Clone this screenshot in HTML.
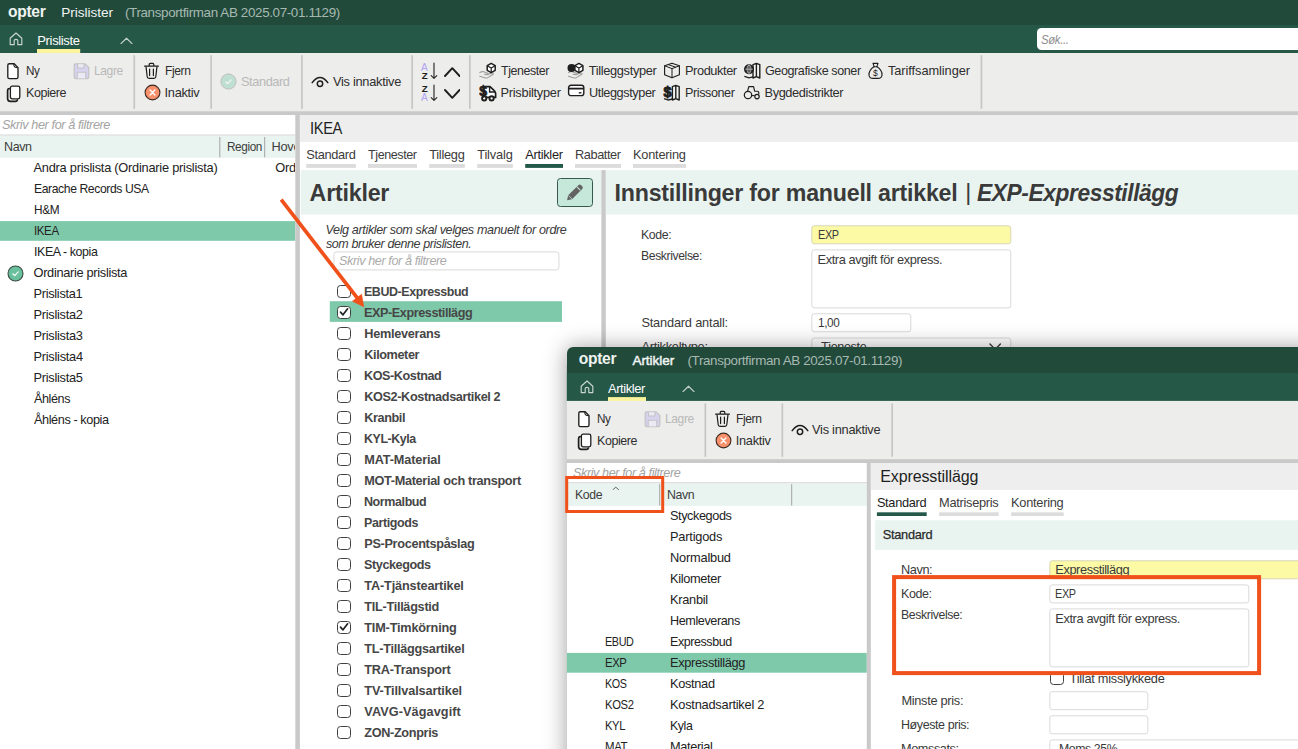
<!DOCTYPE html>
<html lang="no"><head><meta charset="utf-8"><title>Prislister</title>
<style>
html,body{margin:0;padding:0;}
body{width:1298px;height:749px;overflow:hidden;position:relative;background:#fff;
font-family:"Liberation Sans",sans-serif;font-size:12.8px;color:#2e2e2e;}
.b{position:absolute;box-sizing:border-box;}
.t{position:absolute;white-space:nowrap;}
.win{position:absolute;overflow:hidden;}
.inp{position:absolute;box-sizing:border-box;border:1px solid #d9d9d9;border-radius:3px;background:#fff;}
.cb{position:absolute;box-sizing:border-box;width:14px;height:13px;border:1.4px solid #404040;border-radius:3.5px;background:#fff;}
</style></head><body>
<div class="b" style="left:0px;top:20px;width:1298px;height:33px;background:#265848;"></div>
<div class="b" style="left:0;top:0;width:1px;height:1px;transform-origin:0 0;transform:translate(0px,0px) scale(1298,24.9);background:#214a3b;"></div>
<div class="t" style="left:8.1px;top:2.6px;line-height:18px;letter-spacing:-0.325px;font-size:15.6px;color:#eef3f0;font-weight:bold;">opter</div>
<div class="t" style="left:61.2px;top:5.1px;line-height:16px;letter-spacing:-0.038px;font-size:13.6px;color:#f1f5f3;">Prislister</div>
<div class="t" style="left:125.0px;top:5.1px;line-height:16px;letter-spacing:-0.358px;font-size:13.4px;color:#a7b9b1;">(Transportfirman AB 2025.07-01.1129)</div>
<svg class="b" style="left:8px;top:31px;" width="16" height="16" viewBox="0 0 16 16" fill="none"><path d="M2.2 7.2 L8 2 L13.8 7.2 V13.6 H9.8 V9.6 Q9.8 8.4 8 8.4 Q6.2 8.4 6.2 9.6 V13.6 H2.2 Z" stroke="#c9d6cf" stroke-width="1.15" stroke-linejoin="round"/></svg>
<div class="t" style="left:37.3px;top:32.8px;line-height:16px;letter-spacing:-0.352px;font-size:13px;color:#ffffff;">Prisliste</div>
<div class="b" style="left:0;top:0;width:1px;height:1px;transform-origin:0 0;transform:translate(37px,49px) scale(43.2,4.2);background:#fbf49c;"></div>
<svg class="b" style="left:119.5px;top:36.6px;" width="13" height="7.6" viewBox="0 0 13 7.6" fill="none"><path d="M1 6.6 L6.5 1.2 L12 6.6" stroke="#c0cec7" stroke-width="1.25" stroke-linecap="round" stroke-linejoin="round"/></svg>
<div class="b" style="left:1037px;top:27.8px;width:270px;height:22.2px;background:#fff;border-radius:4.5px;"></div>
<div class="t" style="left:1041.3px;top:31.8px;line-height:16px;letter-spacing:-0.420px;font-size:13px;color:#8f8f8f;font-style:italic;transform:scaleX(0.8793);transform-origin:0 50%;">Søk...</div>
<div class="b" style="left:0;top:0;width:1px;height:1px;transform-origin:0 0;transform:translate(0px,53px) scale(1298,58.2);background:#ededeb;"></div>
<div class="b" style="left:0;top:0;width:1px;height:1px;transform-origin:0 0;transform:translate(0px,111.2px) scale(1298,3.8);background:#c9c9c9;"></div>
<div class="b" style="left:0;top:0;width:1px;height:1px;transform-origin:0 0;transform:translate(133.4px,55.2px) scale(1.7,53.6);background:#c6c6c6;"></div>
<div class="b" style="left:0;top:0;width:1px;height:1px;transform-origin:0 0;transform:translate(210.3px,55.2px) scale(1.7,53.6);background:#c6c6c6;"></div>
<div class="b" style="left:0;top:0;width:1px;height:1px;transform-origin:0 0;transform:translate(301.1px,55.2px) scale(1.7,53.6);background:#c6c6c6;"></div>
<div class="b" style="left:0;top:0;width:1px;height:1px;transform-origin:0 0;transform:translate(411.3px,55.2px) scale(1.7,53.6);background:#c6c6c6;"></div>
<div class="b" style="left:0;top:0;width:1px;height:1px;transform-origin:0 0;transform:translate(469px,55.2px) scale(1.7,53.6);background:#c6c6c6;"></div>
<div class="b" style="left:0;top:0;width:1px;height:1px;transform-origin:0 0;transform:translate(980.6px,55.2px) scale(1.7,53.6);background:#c6c6c6;"></div>
<svg class="b" style="left:5.8px;top:62px;" width="14" height="18" viewBox="0 0 14 18" fill="none"><path d="M3.4 1.7 H8.2 L12 5.6 V15 Q12 16.6 10.4 16.6 H3.4 Q1.8 16.6 1.8 15 V3.3 Q1.8 1.7 3.4 1.7 Z" stroke="#1e1e1e" stroke-width="1.35" fill="#fff" stroke-linejoin="round"/><path d="M7.8 2 Q7.6 5.8 11.8 5.8" stroke="#1e1e1e" stroke-width="1.1"/></svg>
<div class="t" style="left:25.9px;top:62.7px;line-height:16px;letter-spacing:-0.420px;transform:scaleX(0.9132);transform-origin:0 50%;">Ny</div>
<svg class="b" style="left:72.6px;top:62.2px;" width="17" height="18" viewBox="0 0 17 18" fill="none"><path d="M2.8 1.8 H12 L15.8 5.4 V15 Q15.8 16.6 14.2 16.6 H2.8 Q1.2 16.6 1.2 15 V3.4 Q1.2 1.8 2.8 1.8 Z" stroke="#c3c3c3" stroke-width="1.2" fill="#d7d2ef"/><path d="M4.6 2.2 V6 H11 V2.2" stroke="#c3c3c3" stroke-width="1.1" fill="#ebe9f3"/><path d="M4.2 16.4 V10.2 H12.8 V16.4" stroke="#c3c3c3" stroke-width="1.1" fill="#ebe9f3"/></svg>
<div class="t" style="left:93.8px;top:62.7px;line-height:16px;letter-spacing:-0.420px;color:#b9b9b9;transform:scaleX(0.9400);transform-origin:0 50%;">Lagre</div>
<svg class="b" style="left:6px;top:84.6px;" width="15" height="18" viewBox="0 0 15 18" fill="none"><path d="M3.2 3.6 Q1.6 3.8 1.6 5.4 V13.6 Q1.6 16.4 4.4 16.4 H9.6 Q11 16.4 11.4 15" stroke="#1e1e1e" stroke-width="1.7" stroke-linecap="round"/><rect x="4.4" y="1.2" width="9.4" height="12.6" rx="1.8" stroke="#1e1e1e" stroke-width="1.3" fill="#fff"/></svg>
<div class="t" style="left:25.5px;top:84.6px;line-height:16px;letter-spacing:-0.420px;transform:scaleX(0.9735);transform-origin:0 50%;">Kopiere</div>
<svg class="b" style="left:143.2px;top:61.6px;" width="17" height="18" viewBox="0 0 17 18" fill="none"><path d="M1.6 4.2 H15.4 M6.2 4 V2.4 Q6.2 1.4 7.2 1.4 H9.8 Q10.8 1.4 10.8 2.4 V4" stroke="#1e1e1e" stroke-width="1.2" stroke-linecap="round"/><path d="M3 4.4 L4.2 14.8 Q4.4 16.4 6 16.4 H11 Q12.6 16.4 12.8 14.8 L14 4.4" stroke="#1e1e1e" stroke-width="1.2"/><path d="M6.6 7 V13.6 M10.4 7 V13.6" stroke="#1e1e1e" stroke-width="1.2" stroke-linecap="round"/></svg>
<div class="t" style="left:164.6px;top:62.7px;line-height:16px;letter-spacing:-0.420px;transform:scaleX(0.9426);transform-origin:0 50%;">Fjern</div>
<svg class="b" style="left:143.6px;top:84.3px;" width="17" height="17" viewBox="0 0 17 17" fill="none"><circle cx="8.5" cy="8.5" r="7.4" fill="#f7906b" stroke="#3a2a22" stroke-width="1.1"/><path d="M6.1 6.1 L10.9 10.9 M10.9 6.1 L6.1 10.9" stroke="#fff" stroke-width="1.4" stroke-linecap="round"/></svg>
<div class="t" style="left:164.6px;top:84.6px;line-height:16px;letter-spacing:-0.315px;">Inaktiv</div>
<svg class="b" style="left:220.4px;top:73.4px;" width="17" height="17" viewBox="0 0 17 17" fill="none"><circle cx="8.5" cy="8.5" r="7.6" fill="#bfdfd2" stroke="#bdbdbd" stroke-width="1"/><path d="M5.8 8.8 L7.7 10.6 L11.2 6.9" stroke="#f3f8f5" stroke-width="1.2" stroke-linecap="round" stroke-linejoin="round"/></svg>
<div class="t" style="left:241.3px;top:73.6px;line-height:16px;letter-spacing:-0.420px;color:#b9b9b9;transform:scaleX(0.9997);transform-origin:0 50%;">Standard</div>
<svg class="b" style="left:311px;top:75.6px;" width="18" height="12" viewBox="0 0 18 12" fill="none"><path d="M1.2 6.6 Q9 -3.6 16.8 6.6" stroke="#1e1e1e" stroke-width="1.5" stroke-linecap="round"/><circle cx="9" cy="7.8" r="2.7" stroke="#1e1e1e" stroke-width="1.5"/></svg>
<div class="t" style="left:332.9px;top:73.6px;line-height:16px;letter-spacing:-0.269px;">Vis innaktive</div>
<svg class="b" style="left:421.4px;top:62.4px;" width="18" height="18" viewBox="0 0 18 18" fill="none"><text x="0.1" y="9.4" font-family="Liberation Sans, sans-serif" font-size="10.2" font-weight="normal" fill="#b0a4f5">A</text><text x="0.7" y="16.8" font-family="Liberation Sans, sans-serif" font-size="9.7" font-weight="bold" fill="#1e1e1e">Z</text><path d="M13 1 V16.2 M10.2 13.6 L13 16.4 L15.8 13.6" stroke="#2a2a2a" stroke-width="1.15" stroke-linecap="round" stroke-linejoin="round"/></svg>
<svg class="b" style="left:421.4px;top:84.4px;" width="18" height="18" viewBox="0 0 18 18" fill="none"><text x="0.7" y="8.2" font-family="Liberation Sans, sans-serif" font-size="9.7" font-weight="bold" fill="#1e1e1e">Z</text><text x="0.1" y="17.2" font-family="Liberation Sans, sans-serif" font-size="10.2" font-weight="normal" fill="#b0a4f5">A</text><path d="M13 1 V16.2 M10.2 13.6 L13 16.4 L15.8 13.6" stroke="#2a2a2a" stroke-width="1.15" stroke-linecap="round" stroke-linejoin="round"/></svg>
<svg class="b" style="left:443.8px;top:66.5px;" width="16.6" height="10" viewBox="0 0 16.6 10" fill="none"><path d="M1 9 L8.3 1.2 L15.600000000000001 9" stroke="#1e1e1e" stroke-width="1.9" stroke-linecap="round" stroke-linejoin="round"/></svg>
<svg class="b" style="left:443.8px;top:88.6px;" width="16.6" height="10" viewBox="0 0 16.6 10" fill="none"><path d="M1 1 L8.3 8.8 L15.600000000000001 1" stroke="#1e1e1e" stroke-width="1.9" stroke-linecap="round" stroke-linejoin="round"/></svg>
<svg class="b" style="left:479.4px;top:62px;" width="18" height="18" viewBox="0 0 18 18" fill="none"><g transform="translate(0 0)"><path d="M0.8 10.6 Q2.6 9.2 4.8 9.8 L8.2 11 Q9.6 11.6 8.6 12.6 L5.6 12.4 M8.8 12.4 L13.4 11 Q14.8 11 14.2 12.2 L8.8 15.6 Q7.8 16.2 6.6 16 L0.8 14.2" stroke="#9d9d9d" stroke-width="1.1" stroke-linejoin="round" stroke-linecap="round"/></g><path d="M12.2 1.4000000000000004 L16.2 3.7 V8.3 L12.2 10.6 L8.2 8.3 V3.7 Z" stroke="#1e1e1e" stroke-width="1.5" fill="#fff" stroke-linejoin="round"/><path d="M8.2 3.7 L12.2 6 L16.2 3.7 M12.2 6 V10.6" stroke="#1e1e1e" stroke-width="1.2" stroke-linejoin="round"/></svg>
<div class="t" style="left:500.5px;top:62.7px;line-height:16px;letter-spacing:-0.420px;transform:scaleX(0.9702);transform-origin:0 50%;">Tjenester</div>
<svg class="b" style="left:479.4px;top:83.6px;" width="18" height="18" viewBox="0 0 18 18" fill="none"><path d="M5 2.6 H11 L15.2 6.6 Q16.6 7.8 16.6 9.6 V13.4 H5 Z" fill="#fff" stroke="#1e1e1e" stroke-width="1.7" stroke-linejoin="round"/><path d="M10.6 3 V8 H16" stroke="#1e1e1e" stroke-width="1.4"/><circle cx="5.2" cy="14.4" r="2.1" fill="#fff" stroke="#1e1e1e" stroke-width="1.9"/><circle cx="12.6" cy="14.4" r="2.1" fill="#fff" stroke="#1e1e1e" stroke-width="1.9"/><text x="0.2" y="12.4" font-family="Liberation Sans,sans-serif" font-size="14" font-weight="bold" fill="#1e1e1e" stroke="#1e1e1e" stroke-width="0.7">$</text></svg>
<div class="t" style="left:500.5px;top:84.6px;line-height:16px;letter-spacing:-0.255px;">Prisbiltyper</div>
<svg class="b" style="left:566.4px;top:62px;" width="19" height="18" viewBox="0 0 19 18" fill="none"><g transform="translate(1.6 0)"><path d="M0.8 10.6 Q2.6 9.2 4.8 9.8 L8.2 11 Q9.6 11.6 8.6 12.6 L5.6 12.4 M8.8 12.4 L13.4 11 Q14.8 11 14.2 12.2 L8.8 15.6 Q7.8 16.2 6.6 16 L0.8 14.2" stroke="#9d9d9d" stroke-width="1.1" stroke-linejoin="round" stroke-linecap="round"/></g><circle cx="5.6" cy="6" r="4.1" fill="#1e1e1e"/><path d="M12.9 1.4000000000000004 L16.9 3.7 V8.3 L12.9 10.6 L8.9 8.3 V3.7 Z" stroke="#1e1e1e" stroke-width="1.5" fill="#fff" stroke-linejoin="round"/><path d="M8.9 3.7 L12.9 6 L16.9 3.7 M12.9 6 V10.6" stroke="#1e1e1e" stroke-width="1.2" stroke-linejoin="round"/></svg>
<div class="t" style="left:588.7px;top:62.7px;line-height:16px;letter-spacing:-0.332px;">Tilleggstyper</div>
<svg class="b" style="left:567px;top:84.2px;" width="19" height="14" viewBox="0 0 19 14" fill="none"><rect x="1.6" y="1.2" width="15.2" height="10.4" rx="2.4" stroke="#1e1e1e" stroke-width="1.4" fill="#fff"/><path d="M1.8 4.6 H16.6" stroke="#1e1e1e" stroke-width="1.8"/><path d="M11.8 8.8 H14.4" stroke="#1e1e1e" stroke-width="1.4"/></svg>
<div class="t" style="left:588.7px;top:84.6px;line-height:16px;letter-spacing:-0.420px;transform:scaleX(0.9935);transform-origin:0 50%;">Utleggstyper</div>
<svg class="b" style="left:662.9px;top:62.2px;" width="18" height="17" viewBox="0 0 18 17" fill="none"><path d="M9 1.2 L16.4 3.8 V12.8 L9 15.8 L1.6 12.8 V3.8 Z" stroke="#1e1e1e" stroke-width="1.15" stroke-linejoin="round"/><path d="M1.6 3.8 L9 6.6 L16.4 3.8 M9 6.6 V15.8 M5.2 2.6 L12.8 5.2" stroke="#1e1e1e" stroke-width="1" stroke-linejoin="round"/></svg>
<div class="t" style="left:684.6px;top:62.7px;line-height:16px;letter-spacing:-0.420px;transform:scaleX(0.9995);transform-origin:0 50%;">Produkter</div>
<svg class="b" style="left:663px;top:84.2px;" width="18" height="18" viewBox="0 0 18 18" fill="none"><path d="M9.4 2.6 L12.8 1.4 L16.2 2.6 V16 L12.8 14.6 L9.4 16 Z M12.8 1.4 V14.6" stroke="#1e1e1e" stroke-width="1.4" fill="#f4f4f2" stroke-linejoin="round"/><path d="M1 14.6 L5.4 16 L9.4 15" stroke="#1e1e1e" stroke-width="1.3"/><text x="0.4" y="12.6" font-family="Liberation Sans, sans-serif" font-size="14.5" font-weight="bold" fill="#1e1e1e" stroke="#1e1e1e" stroke-width="0.9">$</text></svg>
<div class="t" style="left:684.6px;top:84.6px;line-height:16px;letter-spacing:-0.420px;transform:scaleX(0.9841);transform-origin:0 50%;">Prissoner</div>
<svg class="b" style="left:743px;top:62.2px;" width="18" height="18" viewBox="0 0 18 18" fill="none"><path d="M10 2.6 L13.4 1.4 L16.8 2.6 V16 L13.4 14.6 L10 16 Z M13.4 1.4 V14.6" stroke="#1e1e1e" stroke-width="1.4" fill="#f4f4f2" stroke-linejoin="round"/><path d="M1.4 14.4 L6 15.8 L10 14.8" stroke="#1e1e1e" stroke-width="1.3"/><circle cx="6" cy="7.2" r="5" fill="#1e1e1e"/><path d="M2.2 7.2 H9.8 M6 3 V11.4" stroke="#ddd" stroke-width="0.7"/><ellipse cx="6" cy="7.2" rx="2" ry="4.2" stroke="#ddd" stroke-width="0.7"/></svg>
<div class="t" style="left:764.5px;top:62.7px;line-height:16px;letter-spacing:-0.420px;transform:scaleX(0.9819);transform-origin:0 50%;">Geografiske soner</div>
<svg class="b" style="left:743.3px;top:84.6px;" width="18" height="15" viewBox="0 0 18 15" fill="none"><path d="M4.6 6.2 L5.8 1.6 H10.6 L11.6 6.2 H14.4 Q15.8 6.2 15.8 7.8 V9.2" stroke="#1e1e1e" stroke-width="1.15" stroke-linejoin="round"/><circle cx="5" cy="10" r="3.7" stroke="#1e1e1e" stroke-width="1.2"/><circle cx="14" cy="11.6" r="2.2" stroke="#1e1e1e" stroke-width="1.2"/><path d="M8.8 10.6 H11.6" stroke="#1e1e1e" stroke-width="1.1"/></svg>
<div class="t" style="left:764.5px;top:84.6px;line-height:16px;letter-spacing:-0.397px;">Bygdedistrikter</div>
<svg class="b" style="left:867px;top:61.6px;" width="17" height="18" viewBox="0 0 17 18" fill="none"><path d="M6 1.4 H11 L9.8 4.6 Q15.4 8.4 15 13.2 Q14.6 16.4 11 16.4 H6 Q2.4 16.4 2 13.2 Q1.6 8.4 7.2 4.6 Z" stroke="#1e1e1e" stroke-width="1.15" stroke-linejoin="round"/><path d="M6.6 4.8 H10.4" stroke="#1e1e1e" stroke-width="1"/><text x="6" y="14.4" font-family="Liberation Sans, sans-serif" font-size="8.5" fill="#1e1e1e">$</text></svg>
<div class="t" style="left:888.0px;top:62.7px;line-height:16px;letter-spacing:-0.071px;">Tariffsamlinger</div>
<div class="b" style="left:0;top:0;width:1px;height:1px;transform-origin:0 0;transform:translate(0px,115px) scale(295.6,19.6);background:#fff;"></div>
<div class="t" style="left:2.0px;top:116.8px;line-height:16px;letter-spacing:-0.420px;font-size:13px;color:#a3a3a3;font-style:italic;transform:scaleX(0.9768);transform-origin:0 50%;">Skriv her for å filtrere</div>
<div class="b" style="left:0;top:0;width:1px;height:1px;transform-origin:0 0;transform:translate(0px,134.5px) scale(295.3,1.3);background:#d8d8d8;"></div>
<div class="b" style="left:0;top:0;width:1px;height:1px;transform-origin:0 0;transform:translate(0px,135.6px) scale(295.3,22.2);background:#e9f4f0;"></div>
<div class="t" style="left:3.5px;top:139.2px;line-height:16px;letter-spacing:-0.420px;color:#3d3d3d;transform:scaleX(0.9785);transform-origin:0 50%;">Navn</div>
<div class="b" style="left:0;top:0;width:1px;height:1px;transform-origin:0 0;transform:translate(219.3px,137px) scale(1,20.4);background:#a4a4a4;"></div>
<div class="t" style="left:226.6px;top:139.2px;line-height:16px;letter-spacing:-0.420px;color:#3d3d3d;transform:scaleX(0.9204);transform-origin:0 50%;">Region</div>
<div class="b" style="left:0;top:0;width:1px;height:1px;transform-origin:0 0;transform:translate(264.2px,137px) scale(1,20.4);background:#a4a4a4;"></div>
<div class="b" style="left:266px;top:137px;width:29.3px;height:20px;overflow:hidden"><div class="t" style="left:5.5px;top:2.2px;line-height:16px;color:#3d3d3d;letter-spacing:-0.25px">Hoved</div></div>
<div class="t" style="left:33.5px;top:159.6px;line-height:16px;letter-spacing:-0.238px;color:#222;">Andra prislista (Ordinarie prislista)</div>
<div class="t" style="left:33.5px;top:180.6px;line-height:16px;letter-spacing:-0.420px;color:#222;transform:scaleX(0.9504);transform-origin:0 50%;">Earache Records USA</div>
<div class="t" style="left:33.5px;top:201.6px;line-height:16px;letter-spacing:-0.420px;color:#222;transform:scaleX(0.9239);transform-origin:0 50%;">H&amp;M</div>
<div class="b" style="left:0;top:0;width:1px;height:1px;transform-origin:0 0;transform:translate(0px,221.1px) scale(295.3,19.7);background:#7fc9ab;"></div>
<div class="t" style="left:33.5px;top:222.6px;line-height:16px;letter-spacing:-0.420px;color:#222;transform:scaleX(0.8993);transform-origin:0 50%;">IKEA</div>
<div class="t" style="left:33.5px;top:243.6px;line-height:16px;letter-spacing:-0.420px;color:#222;transform:scaleX(0.9707);transform-origin:0 50%;">IKEA - kopia</div>
<div class="t" style="left:33.5px;top:264.6px;line-height:16px;letter-spacing:-0.316px;color:#222;">Ordinarie prislista</div>
<div class="t" style="left:33.5px;top:285.6px;line-height:16px;letter-spacing:-0.303px;color:#222;">Prislista1</div>
<div class="t" style="left:33.5px;top:306.6px;line-height:16px;letter-spacing:-0.281px;color:#222;">Prislista2</div>
<div class="t" style="left:33.5px;top:327.6px;line-height:16px;letter-spacing:-0.281px;color:#222;">Prislista3</div>
<div class="t" style="left:33.5px;top:348.6px;line-height:16px;letter-spacing:-0.259px;color:#222;">Prislista4</div>
<div class="t" style="left:33.5px;top:369.6px;line-height:16px;letter-spacing:-0.281px;color:#222;">Prislista5</div>
<div class="t" style="left:33.5px;top:390.6px;line-height:16px;letter-spacing:-0.420px;color:#222;transform:scaleX(0.9854);transform-origin:0 50%;">Åhléns</div>
<div class="t" style="left:33.5px;top:411.6px;line-height:16px;letter-spacing:-0.420px;color:#222;transform:scaleX(0.9925);transform-origin:0 50%;">Åhléns - kopia</div>
<div class="b" style="left:266px;top:158px;width:29.3px;height:20px;overflow:hidden"><div class="t" style="left:9.3px;top:2.2px;line-height:16px;color:#222;letter-spacing:-0.25px">Ordinarie</div></div>
<svg class="b" style="left:6.5px;top:264.6px;" width="17" height="17" viewBox="0 0 17 17" fill="none"><circle cx="8.5" cy="8.5" r="7.5" fill="#68c09d" stroke="#3a4a43" stroke-width="1.1"/><path d="M5.8 8.8 L7.7 10.6 L11.2 6.9" stroke="#fff" stroke-width="1.2" stroke-linecap="round" stroke-linejoin="round"/></svg>
<div class="b" style="left:0;top:0;width:1px;height:1px;transform-origin:0 0;transform:translate(295.3px,115px) scale(4.6,640);background:#c9c9c9;"></div>
<div class="b" style="left:0;top:0;width:1px;height:1px;transform-origin:0 0;transform:translate(299.9px,115px) scale(1000,26.9);background:#eeeeee;"></div>
<div class="t" style="left:309.6px;top:119.2px;line-height:20px;letter-spacing:-0.420px;font-size:16px;color:#1f1f1f;transform:scaleX(0.9203);transform-origin:0 50%;">IKEA</div>
<div class="t" style="left:306.2px;top:147.3px;line-height:16px;letter-spacing:-0.322px;color:#3c3c3c;">Standard</div>
<div class="b" style="left:0;top:0;width:1px;height:1px;transform-origin:0 0;transform:translate(306.2px,164px) scale(49.69999999999999,3.9);background:#dcdcdc;"></div>
<div class="t" style="left:368.0px;top:147.3px;line-height:16px;letter-spacing:-0.420px;color:#3c3c3c;transform:scaleX(0.9802);transform-origin:0 50%;">Tjenester</div>
<div class="b" style="left:0;top:0;width:1px;height:1px;transform-origin:0 0;transform:translate(368px,164px) scale(49,3.9);background:#dcdcdc;"></div>
<div class="t" style="left:429.2px;top:147.3px;line-height:16px;letter-spacing:-0.273px;color:#3c3c3c;">Tillegg</div>
<div class="b" style="left:0;top:0;width:1px;height:1px;transform-origin:0 0;transform:translate(429.2px,164px) scale(35.60000000000002,3.9);background:#dcdcdc;"></div>
<div class="t" style="left:477.2px;top:147.3px;line-height:16px;letter-spacing:-0.153px;color:#3c3c3c;">Tilvalg</div>
<div class="b" style="left:0;top:0;width:1px;height:1px;transform-origin:0 0;transform:translate(477.2px,164px) scale(35.599999999999966,3.9);background:#dcdcdc;"></div>
<div class="t" style="left:525.2px;top:147.3px;line-height:16px;letter-spacing:-0.289px;color:#1c1c1c;">Artikler</div>
<div class="b" style="left:0;top:0;width:1px;height:1px;transform-origin:0 0;transform:translate(525.2px,164px) scale(37.799999999999955,3.9);background:#24594a;"></div>
<div class="t" style="left:575.0px;top:147.3px;line-height:16px;letter-spacing:-0.420px;color:#3c3c3c;transform:scaleX(0.9968);transform-origin:0 50%;">Rabatter</div>
<div class="b" style="left:0;top:0;width:1px;height:1px;transform-origin:0 0;transform:translate(575px,164px) scale(46,3.9);background:#dcdcdc;"></div>
<div class="t" style="left:633.0px;top:147.3px;line-height:16px;letter-spacing:-0.225px;color:#3c3c3c;">Kontering</div>
<div class="b" style="left:0;top:0;width:1px;height:1px;transform-origin:0 0;transform:translate(633px,164px) scale(53,3.9);background:#dcdcdc;"></div>
<div class="b" style="left:0;top:0;width:1px;height:1px;transform-origin:0 0;transform:translate(300.7px,170.1px) scale(300.7,44.5);background:#e9f4f0;"></div>
<div class="t" style="left:309.6px;top:178.3px;line-height:30px;letter-spacing:-0.203px;font-size:23.2px;color:#3a3a3a;font-weight:bold;">Artikler</div>
<div class="b" style="left:557.2px;top:178px;width:35.8px;height:29px;background:#c5e8da;border:1.2px solid #35594c;border-radius:3.5px;"></div>
<svg class="b" style="left:565.0px;top:181.8px;" width="20.4" height="20.4" viewBox="0 0 18 18" fill="none"><path d="M1.8 16.2 L2.8 11.8 L11.8 2.8 Q13 1.6 14.2 2.8 L15.2 3.8 Q16.4 5 15.2 6.2 L6.2 15.2 Z" fill="#626262"/><path d="M10.6 4.4 L13.6 7.4" stroke="#c5e8da" stroke-width="0.9"/><path d="M3 11.9 L6.1 15" stroke="#c5e8da" stroke-width="0.7"/></svg>
<div class="b" style="left:0;top:0;width:1px;height:1px;transform-origin:0 0;transform:translate(601.4px,170.1px) scale(4.4,600);background:#c9c9c9;"></div>
<div class="b" style="left:0;top:0;width:1px;height:1px;transform-origin:0 0;transform:translate(605.8px,170.1px) scale(700,44.5);background:#e9f4f0;"></div>
<div class="t" style="left:614.6px;top:178.3px;line-height:30px;letter-spacing:-0.223px;font-size:23.2px;color:#3a3a3a;font-weight:bold;">Innstillinger for manuell artikkel</div>
<div class="t" style="left:965.2px;top:177px;line-height:30px;letter-spacing:-0.627px;font-size:23.2px;color:#3a3a3a;">|</div>
<div class="t" style="left:977.4px;top:178.3px;line-height:30px;letter-spacing:-0.420px;font-size:23.2px;color:#3a3a3a;font-weight:bold;font-style:italic;transform:scaleX(0.9815);transform-origin:0 50%;">EXP-Expresstillägg</div>
<div class="t" style="left:325.5px;top:223px;line-height:14px;letter-spacing:-0.373px;font-size:12.6px;color:#3a3a3a;font-style:italic;">Velg artikler som skal velges manuelt for ordre</div>
<div class="t" style="left:325.5px;top:237.2px;line-height:14px;letter-spacing:-0.420px;font-size:12.6px;color:#3a3a3a;font-style:italic;transform:scaleX(0.9929);transform-origin:0 50%;">som bruker denne prislisten.</div>
<div class="inp" style="left:0;top:0;width:226px;height:19px;transform:translate(333.4px,251.4px);"></div>
<div class="t" style="left:339.4px;top:253.2px;line-height:16px;letter-spacing:-0.420px;color:#ababab;font-style:italic;transform:scaleX(0.9888);transform-origin:0 50%;">Skriv her for å filtrere</div>
<div class="cb" style="left:337px;top:284.5px;"></div>
<div class="t" style="left:364.3px;top:283.8px;line-height:16px;letter-spacing:-0.420px;font-size:12.7px;color:#464646;font-weight:bold;transform:scaleX(0.9791);transform-origin:0 50%;">EBUD-Expressbud</div>
<div class="b" style="left:0;top:0;width:1px;height:1px;transform-origin:0 0;transform:translate(329.8px,301.2px) scale(232.2,20.7);background:#7fc9ab;"></div>
<div class="cb" style="left:337px;top:305.5px;"><svg class="b" style="left:0.6px;top:0.3px" width="10" height="10" viewBox="0 0 10 10" fill="none"><path d="M1.5 5.2 L4 7.8 L8.6 1.8" stroke="#222" stroke-width="1.7" stroke-linecap="round" stroke-linejoin="round"/></svg></div>
<div class="t" style="left:364.3px;top:304.8px;line-height:16px;letter-spacing:-0.420px;font-size:12.7px;color:#464646;font-weight:bold;transform:scaleX(0.9953);transform-origin:0 50%;">EXP-Expresstillägg</div>
<div class="cb" style="left:337px;top:326.5px;"></div>
<div class="t" style="left:364.3px;top:325.8px;line-height:16px;letter-spacing:-0.267px;font-size:12.7px;color:#464646;font-weight:bold;">Hemleverans</div>
<div class="cb" style="left:337px;top:347.5px;"></div>
<div class="t" style="left:364.3px;top:346.8px;line-height:16px;letter-spacing:-0.417px;font-size:12.7px;color:#464646;font-weight:bold;">Kilometer</div>
<div class="cb" style="left:337px;top:368.5px;"></div>
<div class="t" style="left:364.3px;top:367.8px;line-height:16px;letter-spacing:-0.420px;font-size:12.7px;color:#464646;font-weight:bold;transform:scaleX(0.9936);transform-origin:0 50%;">KOS-Kostnad</div>
<div class="cb" style="left:337px;top:389.5px;"></div>
<div class="t" style="left:364.3px;top:388.8px;line-height:16px;letter-spacing:-0.390px;font-size:12.7px;color:#464646;font-weight:bold;">KOS2-Kostnadsartikel 2</div>
<div class="cb" style="left:337px;top:410.5px;"></div>
<div class="t" style="left:364.3px;top:409.8px;line-height:16px;letter-spacing:-0.416px;font-size:12.7px;color:#464646;font-weight:bold;">Kranbil</div>
<div class="cb" style="left:337px;top:431.5px;"></div>
<div class="t" style="left:364.3px;top:430.8px;line-height:16px;letter-spacing:-0.420px;font-size:12.7px;color:#464646;font-weight:bold;transform:scaleX(0.9757);transform-origin:0 50%;">KYL-Kyla</div>
<div class="cb" style="left:337px;top:452.5px;"></div>
<div class="t" style="left:364.3px;top:451.8px;line-height:16px;letter-spacing:-0.136px;font-size:12.7px;color:#464646;font-weight:bold;">MAT-Material</div>
<div class="cb" style="left:337px;top:473.5px;"></div>
<div class="t" style="left:364.3px;top:472.8px;line-height:16px;letter-spacing:-0.325px;font-size:12.7px;color:#464646;font-weight:bold;">MOT-Material och transport</div>
<div class="cb" style="left:337px;top:494.5px;"></div>
<div class="t" style="left:364.3px;top:493.8px;line-height:16px;letter-spacing:-0.420px;font-size:12.7px;color:#464646;font-weight:bold;transform:scaleX(0.9863);transform-origin:0 50%;">Normalbud</div>
<div class="cb" style="left:337px;top:515.5px;"></div>
<div class="t" style="left:364.3px;top:514.8px;line-height:16px;letter-spacing:-0.420px;font-size:12.7px;color:#464646;font-weight:bold;transform:scaleX(0.9853);transform-origin:0 50%;">Partigods</div>
<div class="cb" style="left:337px;top:536.5px;"></div>
<div class="t" style="left:364.3px;top:535.8px;line-height:16px;letter-spacing:-0.322px;font-size:12.7px;color:#464646;font-weight:bold;">PS-Procentspåslag</div>
<div class="cb" style="left:337px;top:557.5px;"></div>
<div class="t" style="left:364.3px;top:556.8px;line-height:16px;letter-spacing:-0.420px;font-size:12.7px;color:#464646;font-weight:bold;transform:scaleX(0.9955);transform-origin:0 50%;">Styckegods</div>
<div class="cb" style="left:337px;top:578.5px;"></div>
<div class="t" style="left:364.3px;top:577.8px;line-height:16px;letter-spacing:-0.150px;font-size:12.7px;color:#464646;font-weight:bold;">TA-Tjänsteartikel</div>
<div class="cb" style="left:337px;top:599.5px;"></div>
<div class="t" style="left:364.3px;top:598.8px;line-height:16px;letter-spacing:-0.284px;font-size:12.7px;color:#464646;font-weight:bold;">TIL-Tillägstid</div>
<div class="cb" style="left:337px;top:620.5px;"><svg class="b" style="left:0.6px;top:0.3px" width="10" height="10" viewBox="0 0 10 10" fill="none"><path d="M1.5 5.2 L4 7.8 L8.6 1.8" stroke="#222" stroke-width="1.7" stroke-linecap="round" stroke-linejoin="round"/></svg></div>
<div class="t" style="left:364.3px;top:619.8px;line-height:16px;letter-spacing:-0.185px;font-size:12.7px;color:#464646;font-weight:bold;">TIM-Timkörning</div>
<div class="cb" style="left:337px;top:641.5px;"></div>
<div class="t" style="left:364.3px;top:640.8px;line-height:16px;letter-spacing:-0.260px;font-size:12.7px;color:#464646;font-weight:bold;">TL-Tilläggsartikel</div>
<div class="cb" style="left:337px;top:662.5px;"></div>
<div class="t" style="left:364.3px;top:661.8px;line-height:16px;letter-spacing:-0.200px;font-size:12.7px;color:#464646;font-weight:bold;">TRA-Transport</div>
<div class="cb" style="left:337px;top:683.5px;"></div>
<div class="t" style="left:364.3px;top:682.8px;line-height:16px;letter-spacing:-0.124px;font-size:12.7px;color:#464646;font-weight:bold;">TV-Tillvalsartikel</div>
<div class="cb" style="left:337px;top:704.5px;"></div>
<div class="t" style="left:364.3px;top:703.8px;line-height:16px;letter-spacing:0.084px;font-size:12.7px;color:#464646;font-weight:bold;">VAVG-Vägavgift</div>
<div class="cb" style="left:337px;top:725.5px;"></div>
<div class="t" style="left:364.3px;top:724.8px;line-height:16px;letter-spacing:-0.340px;font-size:12.7px;color:#464646;font-weight:bold;">ZON-Zonpris</div>
<div class="t" style="left:641.4px;top:226.6px;line-height:16px;letter-spacing:-0.420px;color:#3a3a3a;transform:scaleX(0.9633);transform-origin:0 50%;">Kode:</div>
<div class="inp" style="left:0;top:0;width:200px;height:19px;transform:translate(811.3px,225.3px);background:#fdfaa5;border-color:#d6d6b8;"></div>
<div class="t" style="left:817.5px;top:226.8px;line-height:16px;letter-spacing:-0.420px;color:#3a3a3a;transform:scaleX(0.8477);transform-origin:0 50%;">EXP</div>
<div class="t" style="left:641.4px;top:248px;line-height:16px;letter-spacing:-0.420px;color:#3a3a3a;transform:scaleX(0.9536);transform-origin:0 50%;">Beskrivelse:</div>
<div class="inp" style="left:0;top:0;width:200px;height:59px;transform:translate(811.3px,249.4px);"></div>
<div class="t" style="left:817.5px;top:252.4px;line-height:16px;letter-spacing:-0.390px;color:#3a3a3a;">Extra avgift för express.</div>
<div class="t" style="left:641.4px;top:315px;line-height:16px;letter-spacing:-0.191px;color:#3a3a3a;">Standard antall:</div>
<div class="inp" style="left:0;top:0;width:100px;height:19px;transform:translate(811.3px,313.3px);"></div>
<div class="t" style="left:817.5px;top:315px;line-height:16px;letter-spacing:-0.420px;color:#3a3a3a;transform:scaleX(0.9218);transform-origin:0 50%;">1,00</div>
<div class="t" style="left:641.4px;top:339px;line-height:16px;letter-spacing:-0.259px;color:#3a3a3a;">Artikkeltype:</div>
<div class="inp" style="left:0;top:0;width:200px;height:19px;transform:translate(811.3px,337.5px);"></div>
<div class="t" style="left:821.3px;top:339px;line-height:16px;letter-spacing:-0.420px;color:#3a3a3a;transform:scaleX(0.9903);transform-origin:0 50%;">Tjeneste</div>
<svg class="b" style="left:989px;top:342.6px;" width="12.4" height="7.6" viewBox="0 0 12.4 7.6" fill="none"><path d="M1 1 L6.2 6.3999999999999995 L11.4 1" stroke="#333" stroke-width="1.3" stroke-linecap="round" stroke-linejoin="round"/></svg>
<div class="b" style="left:566.9px;top:347.1px;width:800px;height:500px;background:#fff;border-radius:6px 0 0 0;box-shadow:0 1px 22px 1px rgba(0,0,0,0.36);"></div>
<div class="b" style="left:0;top:0;width:1px;height:1px;transform-origin:0 0;transform:translate(566.9px,365px) scale(740,36);background:#265848;"></div>
<div class="b" style="left:0;top:0;width:1px;height:1px;transform-origin:0 0;transform:translate(566.9px,401px) scale(740,59);background:#ededeb;"></div>
<div class="b" style="left:566.9px;top:347.1px;width:740px;height:26px;background:#214a3b;border-radius:6px 0 0 0;"></div>
<div class="b" style="left:0;top:0;width:1px;height:1px;transform-origin:0 0;transform:translate(566.9px,373px) scale(740,27.9);background:#265848;"></div>
<div class="t" style="left:578.8px;top:350.1px;line-height:18px;letter-spacing:-0.325px;font-size:15.6px;color:#eef3f0;font-weight:bold;">opter</div>
<div class="t" style="left:632.4px;top:352.6px;line-height:16px;letter-spacing:-0.059px;font-size:13.6px;color:#f1f5f3;-webkit-text-stroke:0.45px #f1f5f3;">Artikler</div>
<div class="t" style="left:687.5px;top:352.6px;line-height:16px;letter-spacing:-0.366px;font-size:13.4px;color:#a7b9b1;">(Transportfirman AB 2025.07-01.1129)</div>
<svg class="b" style="left:578.9px;top:379.4px;" width="16" height="16" viewBox="0 0 16 16" fill="none"><path d="M2.2 7.2 L8 2 L13.8 7.2 V13.6 H9.8 V9.6 Q9.8 8.4 8 8.4 Q6.2 8.4 6.2 9.6 V13.6 H2.2 Z" stroke="#c9d6cf" stroke-width="1.15" stroke-linejoin="round"/></svg>
<div class="t" style="left:608.3px;top:380.6px;line-height:16px;letter-spacing:-0.420px;font-size:13px;color:#fff;transform:scaleX(0.9946);transform-origin:0 50%;">Artikler</div>
<div class="b" style="left:0;top:0;width:1px;height:1px;transform-origin:0 0;transform:translate(608px,397.1px) scale(38,3.9);background:#fbf49c;"></div>
<svg class="b" style="left:681.5px;top:384.8px;" width="13" height="7.6" viewBox="0 0 13 7.6" fill="none"><path d="M1 6.6 L6.5 1.2 L12 6.6" stroke="#c0cec7" stroke-width="1.25" stroke-linecap="round" stroke-linejoin="round"/></svg>
<div class="b" style="left:0;top:0;width:1px;height:1px;transform-origin:0 0;transform:translate(566.9px,400.9px) scale(740,58.3);background:#ededeb;"></div>
<div class="b" style="left:0;top:0;width:1px;height:1px;transform-origin:0 0;transform:translate(566.9px,459.2px) scale(740,3.8);background:#c9c9c9;"></div>
<div class="b" style="left:0;top:0;width:1px;height:1px;transform-origin:0 0;transform:translate(704.5px,403.4px) scale(1.7,53.4);background:#c6c6c6;"></div>
<div class="b" style="left:0;top:0;width:1px;height:1px;transform-origin:0 0;transform:translate(781.5px,403.4px) scale(1.7,53.4);background:#c6c6c6;"></div>
<div class="b" style="left:0;top:0;width:1px;height:1px;transform-origin:0 0;transform:translate(891.3px,403.4px) scale(1.7,53.4);background:#c6c6c6;"></div>
<svg class="b" style="left:577.0px;top:410px;" width="14" height="18" viewBox="0 0 14 18" fill="none"><path d="M3.4 1.7 H8.2 L12 5.6 V15 Q12 16.6 10.4 16.6 H3.4 Q1.8 16.6 1.8 15 V3.3 Q1.8 1.7 3.4 1.7 Z" stroke="#1e1e1e" stroke-width="1.35" fill="#fff" stroke-linejoin="round"/><path d="M7.8 2 Q7.6 5.8 11.8 5.8" stroke="#1e1e1e" stroke-width="1.1"/></svg>
<div class="t" style="left:597.1px;top:410.7px;line-height:16px;letter-spacing:-0.420px;transform:scaleX(0.9132);transform-origin:0 50%;">Ny</div>
<svg class="b" style="left:643.8000000000001px;top:410.2px;" width="17" height="18" viewBox="0 0 17 18" fill="none"><path d="M2.8 1.8 H12 L15.8 5.4 V15 Q15.8 16.6 14.2 16.6 H2.8 Q1.2 16.6 1.2 15 V3.4 Q1.2 1.8 2.8 1.8 Z" stroke="#c3c3c3" stroke-width="1.2" fill="#d7d2ef"/><path d="M4.6 2.2 V6 H11 V2.2" stroke="#c3c3c3" stroke-width="1.1" fill="#ebe9f3"/><path d="M4.2 16.4 V10.2 H12.8 V16.4" stroke="#c3c3c3" stroke-width="1.1" fill="#ebe9f3"/></svg>
<div class="t" style="left:665.0px;top:410.7px;line-height:16px;letter-spacing:-0.420px;color:#b9b9b9;transform:scaleX(0.9400);transform-origin:0 50%;">Lagre</div>
<svg class="b" style="left:577.2px;top:432.6px;" width="15" height="18" viewBox="0 0 15 18" fill="none"><path d="M3.2 3.6 Q1.6 3.8 1.6 5.4 V13.6 Q1.6 16.4 4.4 16.4 H9.6 Q11 16.4 11.4 15" stroke="#1e1e1e" stroke-width="1.7" stroke-linecap="round"/><rect x="4.4" y="1.2" width="9.4" height="12.6" rx="1.8" stroke="#1e1e1e" stroke-width="1.3" fill="#fff"/></svg>
<div class="t" style="left:596.7px;top:432.6px;line-height:16px;letter-spacing:-0.420px;transform:scaleX(0.9735);transform-origin:0 50%;">Kopiere</div>
<svg class="b" style="left:714.4000000000001px;top:409.6px;" width="17" height="18" viewBox="0 0 17 18" fill="none"><path d="M1.6 4.2 H15.4 M6.2 4 V2.4 Q6.2 1.4 7.2 1.4 H9.8 Q10.8 1.4 10.8 2.4 V4" stroke="#1e1e1e" stroke-width="1.2" stroke-linecap="round"/><path d="M3 4.4 L4.2 14.8 Q4.4 16.4 6 16.4 H11 Q12.6 16.4 12.8 14.8 L14 4.4" stroke="#1e1e1e" stroke-width="1.2"/><path d="M6.6 7 V13.6 M10.4 7 V13.6" stroke="#1e1e1e" stroke-width="1.2" stroke-linecap="round"/></svg>
<div class="t" style="left:735.8px;top:410.7px;line-height:16px;letter-spacing:-0.420px;transform:scaleX(0.9426);transform-origin:0 50%;">Fjern</div>
<svg class="b" style="left:714.8000000000001px;top:432.3px;" width="17" height="17" viewBox="0 0 17 17" fill="none"><circle cx="8.5" cy="8.5" r="7.4" fill="#f7906b" stroke="#3a2a22" stroke-width="1.1"/><path d="M6.1 6.1 L10.9 10.9 M10.9 6.1 L6.1 10.9" stroke="#fff" stroke-width="1.4" stroke-linecap="round"/></svg>
<div class="t" style="left:735.8px;top:432.6px;line-height:16px;letter-spacing:-0.315px;">Inaktiv</div>
<svg class="b" style="left:791.2px;top:423.8px;" width="18" height="12" viewBox="0 0 18 12" fill="none"><path d="M1.2 6.6 Q9 -3.6 16.8 6.6" stroke="#1e1e1e" stroke-width="1.5" stroke-linecap="round"/><circle cx="9" cy="7.8" r="2.7" stroke="#1e1e1e" stroke-width="1.5"/></svg>
<div class="t" style="left:812.0px;top:421.8px;line-height:16px;letter-spacing:-0.252px;">Vis innaktive</div>
<div class="b" style="left:0;top:0;width:1px;height:1px;transform-origin:0 0;transform:translate(566.9px,463px) scale(299.9,19.3);background:#fff;"></div>
<div class="t" style="left:573.3px;top:464.6px;line-height:16px;letter-spacing:-0.420px;font-size:13px;color:#a3a3a3;font-style:italic;transform:scaleX(0.9713);transform-origin:0 50%;">Skriv her for å filtrere</div>
<div class="b" style="left:0;top:0;width:1px;height:1px;transform-origin:0 0;transform:translate(566.9px,482.2px) scale(299.9,1.3);background:#d8d8d8;"></div>
<div class="b" style="left:0;top:0;width:1px;height:1px;transform-origin:0 0;transform:translate(566.9px,483.5px) scale(299.9,22.4);background:#e9f4f0;"></div>
<div class="t" style="left:574.5px;top:486.8px;line-height:16px;letter-spacing:-0.420px;color:#3d3d3d;transform:scaleX(0.9606);transform-origin:0 50%;">Kode</div>
<svg class="b" style="left:612.4px;top:485.8px;" width="7.6" height="4.6" viewBox="0 0 7.6 4.6" fill="none"><path d="M1 3.5999999999999996 L3.8 1.2 L6.6 3.5999999999999996" stroke="#555" stroke-width="0.9" stroke-linecap="round" stroke-linejoin="round"/></svg>
<div class="b" style="left:0;top:0;width:1px;height:1px;transform-origin:0 0;transform:translate(659.2px,484.2px) scale(1,21.4);background:#a4a4a4;"></div>
<div class="t" style="left:666.7px;top:486.8px;line-height:16px;letter-spacing:-0.420px;color:#3d3d3d;transform:scaleX(0.9645);transform-origin:0 50%;">Navn</div>
<div class="b" style="left:0;top:0;width:1px;height:1px;transform-origin:0 0;transform:translate(791.2px,484.2px) scale(1,21.4);background:#a4a4a4;"></div>
<div class="t" style="left:670.0px;top:507.8px;line-height:16px;letter-spacing:-0.420px;color:#222;transform:scaleX(0.9923);transform-origin:0 50%;">Styckegods</div>
<div class="t" style="left:670.0px;top:528.8px;line-height:16px;letter-spacing:-0.210px;color:#222;">Partigods</div>
<div class="t" style="left:670.0px;top:549.8px;line-height:16px;letter-spacing:-0.201px;color:#222;">Normalbud</div>
<div class="t" style="left:670.0px;top:570.8px;line-height:16px;letter-spacing:-0.358px;color:#222;">Kilometer</div>
<div class="t" style="left:670.0px;top:591.8px;line-height:16px;letter-spacing:-0.274px;color:#222;">Kranbil</div>
<div class="t" style="left:670.0px;top:612.8px;line-height:16px;letter-spacing:-0.420px;color:#222;transform:scaleX(0.9873);transform-origin:0 50%;">Hemleverans</div>
<div class="t" style="left:604.6px;top:633.8px;line-height:16px;letter-spacing:-0.420px;color:#222;transform:scaleX(0.8426);transform-origin:0 50%;">EBUD</div>
<div class="t" style="left:670.0px;top:633.8px;line-height:16px;letter-spacing:-0.420px;color:#222;transform:scaleX(0.9747);transform-origin:0 50%;">Expressbud</div>
<div class="b" style="left:0;top:0;width:1px;height:1px;transform-origin:0 0;transform:translate(566.9px,652.9px) scale(299.9,19.8);background:#7fc9ab;"></div>
<div class="t" style="left:604.6px;top:654.8px;line-height:16px;letter-spacing:-0.420px;color:#222;transform:scaleX(0.8800);transform-origin:0 50%;">EXP</div>
<div class="t" style="left:670.0px;top:654.8px;line-height:16px;letter-spacing:-0.322px;color:#222;">Expresstillägg</div>
<div class="t" style="left:604.6px;top:675.8px;line-height:16px;letter-spacing:-0.420px;color:#222;transform:scaleX(0.8399);transform-origin:0 50%;">KOS</div>
<div class="t" style="left:670.0px;top:675.8px;line-height:16px;letter-spacing:-0.327px;color:#222;">Kostnad</div>
<div class="t" style="left:604.6px;top:696.8px;line-height:16px;letter-spacing:-0.420px;color:#222;transform:scaleX(0.8787);transform-origin:0 50%;">KOS2</div>
<div class="t" style="left:670.0px;top:696.8px;line-height:16px;letter-spacing:-0.231px;color:#222;">Kostnadsartikel 2</div>
<div class="t" style="left:604.6px;top:717.8px;line-height:16px;letter-spacing:-0.420px;color:#222;transform:scaleX(0.8736);transform-origin:0 50%;">KYL</div>
<div class="t" style="left:670.0px;top:717.8px;line-height:16px;letter-spacing:-0.420px;color:#222;transform:scaleX(0.9641);transform-origin:0 50%;">Kyla</div>
<div class="t" style="left:604.6px;top:738.8px;line-height:16px;letter-spacing:-0.420px;color:#222;transform:scaleX(0.8956);transform-origin:0 50%;">MAT</div>
<div class="t" style="left:670.0px;top:738.8px;line-height:16px;letter-spacing:-0.390px;color:#222;">Material</div>
<div class="b" style="left:0;top:0;width:1px;height:1px;transform-origin:0 0;transform:translate(866.8px,463px) scale(4,300);background:#c9c9c9;"></div>
<div class="b" style="left:0;top:0;width:98.8px;height:37px;transform:translate(565.2px,476px);border:3.8px solid #f0501a;"></div>
<div class="b" style="left:0;top:0;width:1px;height:1px;transform-origin:0 0;transform:translate(870.8px,463px) scale(440,26.9);background:#eeeeee;"></div>
<div class="t" style="left:880.2px;top:467.3px;line-height:20px;letter-spacing:-0.108px;font-size:16px;color:#1f1f1f;">Expresstillägg</div>
<div class="t" style="left:876.9px;top:494.9px;line-height:16px;letter-spacing:-0.308px;color:#1c1c1c;">Standard</div>
<div class="b" style="left:0;top:0;width:1px;height:1px;transform-origin:0 0;transform:translate(876.9px,512.3px) scale(49.80000000000007,3.7);background:#24594a;"></div>
<div class="t" style="left:939.1px;top:494.9px;line-height:16px;letter-spacing:-0.299px;color:#3c3c3c;">Matrisepris</div>
<div class="b" style="left:0;top:0;width:1px;height:1px;transform-origin:0 0;transform:translate(939.1px,512.3px) scale(59.60000000000002,3.7);background:#dcdcdc;"></div>
<div class="t" style="left:1011.1px;top:494.9px;line-height:16px;letter-spacing:-0.275px;color:#3c3c3c;">Kontering</div>
<div class="b" style="left:0;top:0;width:1px;height:1px;transform-origin:0 0;transform:translate(1011.1px,512.3px) scale(52.60000000000002,3.7);background:#dcdcdc;"></div>
<div class="b" style="left:0;top:0;width:1px;height:1px;transform-origin:0 0;transform:translate(875.1px,520.2px) scale(430,29.7);background:#e9f4f0;"></div>
<div class="t" style="left:882.8px;top:526.9px;line-height:16px;letter-spacing:-0.294px;color:#2a2a2a;-webkit-text-stroke:0.25px #2a2a2a;">Standard</div>
<div class="t" style="left:901.4px;top:561.9px;line-height:16px;letter-spacing:-0.420px;color:#3a3a3a;transform:scaleX(0.9952);transform-origin:0 50%;">Navn:</div>
<div class="inp" style="left:0;top:0;width:260px;height:19px;transform:translate(1049.3px,560.3px);background:#fdfaa5;border-color:#d6d6b8;"></div>
<div class="t" style="left:1055.3px;top:561.9px;line-height:16px;letter-spacing:-0.414px;color:#3a3a3a;">Expresstillägg</div>
<div class="t" style="left:901.4px;top:586px;line-height:16px;letter-spacing:-0.420px;color:#3a3a3a;transform:scaleX(0.9759);transform-origin:0 50%;">Kode:</div>
<div class="inp" style="left:0;top:0;width:200px;height:19px;transform:translate(1049.3px,584.4px);"></div>
<div class="t" style="left:1055.3px;top:586px;line-height:16px;letter-spacing:-0.420px;color:#3a3a3a;transform:scaleX(0.8477);transform-origin:0 50%;">EXP</div>
<div class="t" style="left:901.4px;top:607px;line-height:16px;letter-spacing:-0.420px;color:#3a3a3a;transform:scaleX(0.9599);transform-origin:0 50%;">Beskrivelse:</div>
<div class="inp" style="left:0;top:0;width:200px;height:59px;transform:translate(1049.3px,608.4px);"></div>
<div class="t" style="left:1055.3px;top:611.4px;line-height:16px;letter-spacing:-0.390px;color:#3a3a3a;">Extra avgift för express.</div>
<div class="cb" style="left:1050px;top:672px;"></div>
<div class="t" style="left:1069.6px;top:670.8px;line-height:16px;letter-spacing:-0.271px;color:#3a3a3a;">Tillat misslykkede</div>
<div class="t" style="left:901.4px;top:693.4px;line-height:16px;letter-spacing:-0.303px;color:#3a3a3a;">Minste pris:</div>
<div class="inp" style="left:0;top:0;width:99px;height:19px;transform:translate(1049.3px,691.2px);"></div>
<div class="t" style="left:901.4px;top:717.4px;line-height:16px;letter-spacing:-0.420px;color:#3a3a3a;transform:scaleX(0.9751);transform-origin:0 50%;">Høyeste pris:</div>
<div class="inp" style="left:0;top:0;width:99px;height:19px;transform:translate(1049.3px,715.3px);"></div>
<div class="t" style="left:901.4px;top:741.2px;line-height:16px;letter-spacing:-0.420px;color:#3a3a3a;transform:scaleX(0.9929);transform-origin:0 50%;">Momssats:</div>
<div class="inp" style="left:0;top:0;width:260px;height:19px;transform:translate(1049.3px,739.4px);"></div>
<div class="t" style="left:1059.0px;top:741.2px;line-height:16px;letter-spacing:-0.420px;color:#3a3a3a;transform:scaleX(0.9595);transform-origin:0 50%;">Moms 25%</div>
<div class="b" style="left:0;top:0;width:368.8px;height:99.7px;transform:translate(892.1px,575.1px);border:4px solid #f0501a;"></div>
<svg class="b" style="left:0;top:0" width="1298" height="749" viewBox="0 0 1298 749" fill="none"><path d="M281.2 199.6 L357.4 298.2" stroke="#f0501a" stroke-width="3.7"/><path d="M363.9 306.9 L352.3 301.2 L361.6 294.1 Z" fill="#f0501a" stroke="#f0501a" stroke-width="0.4" stroke-linejoin="round"/></svg>
</body></html>
